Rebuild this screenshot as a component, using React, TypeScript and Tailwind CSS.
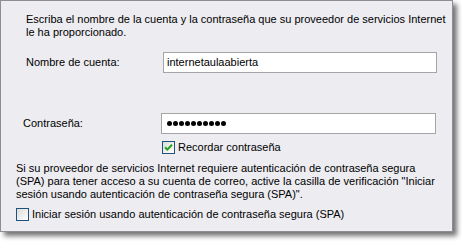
import React from "react";

function Check({ checked }: { checked?: boolean }) {
  return (
    <div className="w-[13px] h-[13px] border border-[#1c5180] bg-gradient-to-br from-[#dcdcd7] to-white flex items-center justify-center shrink-0">
      {checked && (
        <svg width="9" height="9" viewBox="0 0 9 9">
          <path d="M1 4.2 L3.3 6.6 L8 1.8" fill="none" stroke="#21a121" strokeWidth="2" />
        </svg>
      )}
    </div>
  );
}

export default function App() {
  return (
    <div
      className="w-[462px] h-[242px] bg-white text-black text-[11px] leading-[13px]"
      style={{ fontFamily: '"Liberation Sans", Arial, sans-serif' }}
    >
      <div className="w-[453px] h-[232px] border border-[#8e8e8e] bg-[#edecf1] shadow-[4px_4px_5px_rgba(0,0,0,0.55)] flex flex-col">
        <div className="ml-[25px] mt-[12px] w-[422px]">
          Escriba el nombre de la cuenta y la contraseña que su proveedor de servicios Internet le ha proporcionado.
        </div>
        <div className="flex items-center mt-[13px]">
          <div className="ml-[25px] w-[137px]">Nombre de cuenta:</div>
          <div className="w-[274px] h-[21px] border border-[#a5a5a5] bg-white flex items-center pl-[3px]">
            internetaulaabierta
          </div>
        </div>
        <div className="flex items-center mt-[40px]">
          <div className="ml-[22px] w-[138px]">Contraseña:</div>
          <div className="w-[275px] h-[21px] border border-[#a5a5a5] bg-white flex items-center pl-[5px] gap-[1px]">
            {Array.from({ length: 10 }).map((_, i) => (
              <div key={i} className="w-[5px] h-[5px] rounded-full bg-black" />
            ))}
          </div>
        </div>
        <div className="flex items-center mt-[7px] ml-[161px] gap-[3px]">
          <Check checked />
          <span>Recordar contraseña</span>
        </div>
        <div className="ml-[15px] mt-[8px] w-[420px]">
          Si su proveedor de servicios Internet requiere autenticación de contraseña segura (SPA) para tener acceso a su cuenta de correo, active la casilla de verificación "Iniciar sesión usando autenticación de contraseña segura (SPA)".
        </div>
        <div className="flex items-center mt-[7px] ml-[15px] gap-[3px]">
          <Check />
          <span>Iniciar sesión usando autenticación de contraseña segura (SPA)</span>
        </div>
      </div>
    </div>
  );
}
